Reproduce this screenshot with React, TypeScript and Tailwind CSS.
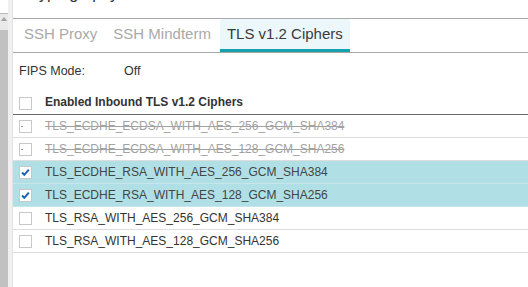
import React from "react";

type Row = { name: string; state: "disabled" | "checked" | "unchecked" };

const rows: Row[] = [
  { name: "TLS_ECDHE_ECDSA_WITH_AES_256_GCM_SHA384", state: "disabled" },
  { name: "TLS_ECDHE_ECDSA_WITH_AES_128_GCM_SHA256", state: "disabled" },
  { name: "TLS_ECDHE_RSA_WITH_AES_256_GCM_SHA384", state: "checked" },
  { name: "TLS_ECDHE_RSA_WITH_AES_128_GCM_SHA256", state: "checked" },
  { name: "TLS_RSA_WITH_AES_256_GCM_SHA384", state: "unchecked" },
  { name: "TLS_RSA_WITH_AES_128_GCM_SHA256", state: "unchecked" },
];

function Box({ state }: { state: Row["state"] | "header" }) {
  return (
    <div className="relative w-[13px] h-[13px] bg-white border border-[#c8c8c8] box-border">
      {state === "checked" && (
        <svg className="absolute left-0 top-0" width="11" height="11" viewBox="0 0 11 11">
          <path d="M2 5.5 L4.3 7.8 L8.8 2.6" fill="none" stroke="#1a62b5" strokeWidth="2" />
        </svg>
      )}
      {state === "disabled" && (
        <div className="absolute left-[1px] top-[5px] w-[2px] h-[1px] bg-[#9a9a9a]" />
      )}
    </div>
  );
}

export default function App() {
  return (
    <div
      className="w-[528px] h-[287px] overflow-hidden flex bg-white"
      style={{ fontFamily: '"Liberation Sans", Arial, sans-serif' }}
    >
      {/* scrollbar */}
      <div className="w-[8px] h-full flex flex-col">
        <div className="h-[14px] bg-white border-b border-[#b8b8b8] box-border" />
        <div className="h-[16px] bg-[#e9e9e9] flex justify-center pt-[3px]">
          <svg width="6" height="4" viewBox="0 0 6 4">
            <path d="M0 4 L3 0 L6 4 Z" fill="#a0a0a0" />
          </svg>
        </div>
        <div className="flex-1 bg-[#c1c1c1]" />
      </div>
      <div className="w-[5px] h-full bg-[#f0f0f0] border-r border-[#e3e3e3] box-border" />

      {/* main */}
      <div className="flex-1 flex flex-col min-w-0">
        <div className="h-[18px] overflow-hidden pl-[9px]">
          <div className="-mt-[14px] text-[16px] leading-none text-[#333333]">Cryptography</div>
        </div>

        {/* tabs */}
        <div className="h-[35px] border-t border-b border-[#a8a8a8] flex items-stretch pl-[4px] gap-[2px] text-[15px]">
          <div className="px-[7px] flex items-center text-[#a9a9a9] pb-[2px]">SSH Proxy</div>
          <div className="px-[7px] flex items-center text-[#a9a9a9] pb-[2px]">SSH Mindterm</div>
          <div className="px-[7px] flex items-center text-[#3a3a3a] bg-[#ebf7fa] rounded-t-[3px] border-b-[3px] border-[#14a0ae]">
            TLS v1.2 Ciphers
          </div>
        </div>

        {/* FIPS */}
        <div className="mt-[10px] h-[16px] flex items-center text-[12.5px] text-[#333333] pl-[6px]">
          <span className="w-[105px]">FIPS Mode:</span>
          <span>Off</span>
        </div>

        {/* table header */}
        <div className="mt-[11px] h-[25px] box-border border-b border-[#6a6a6a] flex items-center">
          <div className="w-[32px] pl-[6px] pt-[2px]">
            <Box state="header" />
          </div>
          <div className="text-[12px] font-bold text-[#333333]">Enabled Inbound TLS v1.2 Ciphers</div>
        </div>

        {rows.map((r) => (
          <div
            key={r.name}
            className={
              "h-[23px] box-border border-b flex items-center " +
              (r.state === "checked" ? "bg-[#b0e0e6] border-[#c6e6ea]" : "border-[#dddddd]")
            }
          >
            <div className="w-[32px] pl-[6px]">
              <Box state={r.state} />
            </div>
            <div
              className={
                "text-[12px] whitespace-nowrap " +
                (r.state === "disabled"
                  ? "text-[#a2a2a2] line-through"
                  : r.state === "checked"
                  ? "text-[#444444]"
                  : "text-[#333333]")
              }
            >
              {r.name}
            </div>
          </div>
        ))}
      </div>
    </div>
  );
}
